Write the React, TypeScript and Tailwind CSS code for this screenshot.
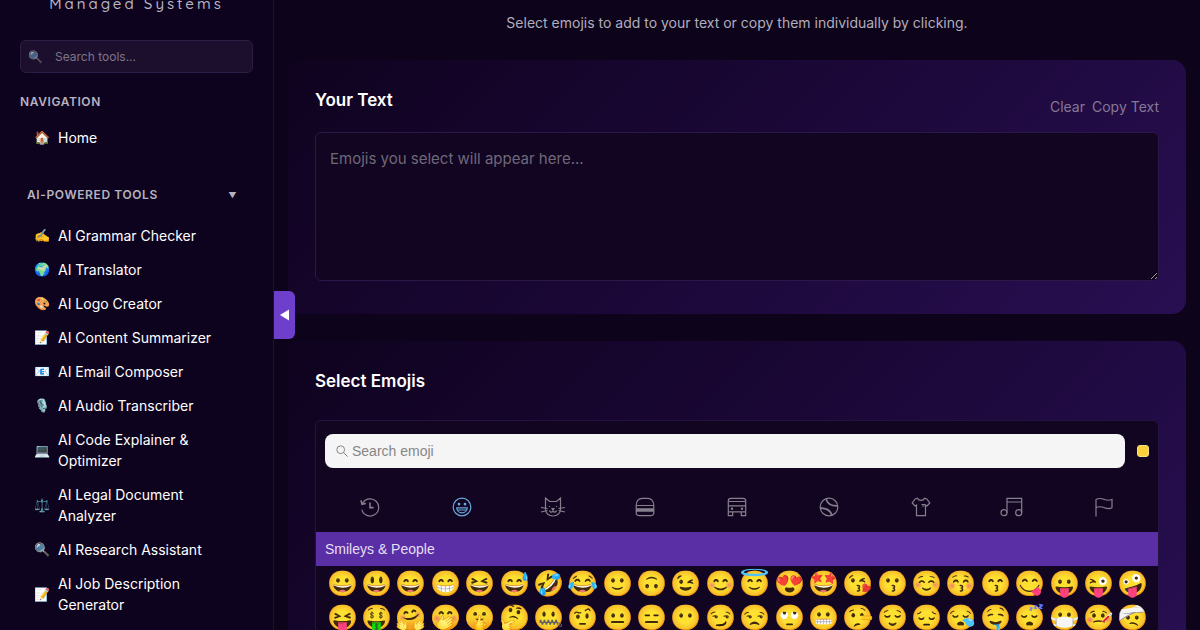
import { useRef, useState } from "react";
import type { ReactNode } from "react";

interface Tool {
  icon: string;
  label: string;
}

const tools: Tool[] = [
  { icon: "✍️", label: "AI Grammar Checker" },
  { icon: "🌍", label: "AI Translator" },
  { icon: "🎨", label: "AI Logo Creator" },
  { icon: "📝", label: "AI Content Summarizer" },
  { icon: "📧", label: "AI Email Composer" },
  { icon: "🎙️", label: "AI Audio Transcriber" },
  { icon: "💻", label: "AI Code Explainer & Optimizer" },
  { icon: "⚖️", label: "AI Legal Document Analyzer" },
  { icon: "🔍", label: "AI Research Assistant" },
  { icon: "📝", label: "AI Job Description Generator" },
];

const smileys = [
  "😀", "😃", "😄", "😁", "😆", "😅", "🤣", "😂", "🙂", "🙃", "😉", "😊",
  "😇", "😍", "🤩", "😘", "😗", "☺️", "😚", "😙", "😋", "😛", "😜", "🤪",
  "😝", "🤑", "🤗", "🤭", "🤫", "🤔", "🤐", "🤨", "😐", "😑", "😶", "😏",
  "😒", "🙄", "😬", "🤥", "😌", "😔", "😪", "🤤", "😴", "😷", "🤒", "🤕",
];

const categories: { name: string; art: ReactNode }[] = [
  {
    name: "Recently Used",
    art: (
      <>
        <path d="M2.6 6.2A8.6 8.6 0 1 1 1.8 12.6" />
        <path d="M1 3.4l1 3.8 3.8-.8M10 5.6v5h3.6" strokeWidth="1.6" />
      </>
    ),
  },
  {
    name: "Smileys & People",
    art: (
      <>
        <circle cx="10" cy="10" r="8.8" />
        <path d="M4.8 10.8h10.4c0 3-2.3 5-5.2 5s-5.2-2-5.2-5zM5.6 13h8.8" />
        <circle cx="7" cy="7.2" r=".8" fill="currentColor" />
        <circle cx="13" cy="7.2" r=".8" fill="currentColor" />
      </>
    ),
  },
  {
    name: "Animals & Nature",
    art: (
      <>
        <path d="M2.5 12V1l4 3.5h7l4-3.5v11c0 4-3 7-7.5 7s-7.5-3-7.5-7z" />
        <path d="M-2 10.5l6.500 1M-2 15l6.500-1.500M22 10.500l-6.500 1M22 15l-6.500-1.500" />
        <path d="M9 11.500h2l-1 1.500zM6.500 13.500c.5 2 3 2 3.500.5.5 1.500 3 1.500 3.500-.5M6.500 9v1M13.500 9v1" />
      </>
    ),
  },
  {
    name: "Food & Drink",
    art: (
      <path d="M1.200 8.500C1.200 4 4 1.300 7 1.300h6c3 0 5.800 2.700 5.800 7.200zM1.200 8.500v7M18.800 8.500v7M1.200 11.800h17.600M1.200 13h17.600M1.200 14.200h17.600v1.300a3.200 3.200 0 0 1-3.200 3.200H4.400a3.200 3.200 0 0 1-3.200-3.200v-1.300" />
    ),
  },
  {
    name: "Travel & Places",
    art: (
      <>
        <path d="M1.300 14.800V4c0-1.800 1-2.700 2.700-2.700h12c1.700 0 2.700.9 2.700 2.700v10.800zM1.300 8.800h17.400M2 4.500h16M1.300 14.800v3.900h4.400v-3.900M14.300 14.800v3.900h4.400v-3.900" />
        <circle cx="5" cy="11.800" r=".6" />
        <circle cx="15" cy="11.800" r=".6" />
      </>
    ),
  },
  {
    name: "Activities",
    art: (
      <>
        <circle cx="10" cy="10" r="8.800" />
        <path
          d="M7 1.900c1.500 4.500 5.800 7.200 11.600 7M1.400 11.100c5.800-.2 10 2.600 11.500 7.200"
          strokeWidth="1.700"
        />
      </>
    ),
  },
  {
    name: "Objects",
    art: (
      <path d="M6.500 1.300c1 2.800 6 2.800 7 0l2.300.7 3 4-2.800 3-1.500-1v10.700h-9V8L4 9 1.200 6l3-4zM10.500 7.500h4M11 9h2.500" />
    ),
  },
  {
    name: "Symbols",
    art: (
      <>
        <path d="M5 15.700V1.300h14.700v14.400M5 5h14.700" />
        <circle cx="2" cy="15.700" r="3" />
        <circle cx="16.700" cy="15.700" r="3" />
      </>
    ),
  },
  {
    name: "Flags",
    art: (
      <path d="M2 19.500V2.500c3-1.800 6-1 8.500 0s5 1 7.500 0v8.200c-2.500 1.300-5 1-7.500 0S5 9.300 2 10.500" />
    ),
  },
];

function ToolLink({ icon, label }: Tool) {
  return (
    <a
      href="#"
      className="flex items-center gap-2 rounded-md py-1.5 pr-8 pl-3.5 text-[14px] leading-[21px] text-white hover:bg-white/5"
    >
      <span className="w-4 shrink-0 text-center text-[13px]">{icon}</span>
      <span>{label}</span>
    </a>
  );
}

function Sidebar() {
  const [open, setOpen] = useState(true);

  return (
    <aside className="relative w-[274px] shrink-0 border-r border-[#1f1136] bg-[#0e031e]">
      <div className="h-full overflow-hidden px-5">
        <div className="-mt-2 text-center font-[Quicksand,Lato,sans-serif] text-[15px] leading-6 font-medium tracking-[3px] text-[#b9b4c2]">
          Managed Systems
        </div>

        <div className="mt-6 flex h-[33px] items-center gap-3 rounded-md border border-[#2d1d45] bg-[#1c0f2e] px-[7px]">
          <span className="text-xs opacity-70">🔍</span>
          <input
            type="text"
            aria-label="Search tools"
            placeholder="Search tools..."
            className="w-full min-w-0 bg-transparent text-xs text-white placeholder-[#7c7586] outline-none"
          />
        </div>

        <h3 className="mt-5 text-xs leading-[18px] font-semibold tracking-wider text-[#b7b2bf]">
          NAVIGATION
        </h3>
        <nav className="mt-2.5">
          <ToolLink icon="🏠" label="Home" />
        </nav>

        <button
          onClick={() => setOpen(!open)}
          className="mt-[31px] flex w-full items-center justify-between px-[7px] pr-4 text-xs leading-5 font-semibold tracking-wider text-[#b7b2bf]"
        >
          AI-POWERED TOOLS
          <span className="text-[8px]">▼</span>
        </button>
        {open && (
          <nav className="mt-3.5 space-y-px">
            {tools.map((tool) => (
              <ToolLink key={tool.label} {...tool} />
            ))}
          </nav>
        )}
      </div>

      {/* Collapse handle */}
      <button
        aria-label="Collapse sidebar"
        className="absolute top-1/2 left-[274px] z-10 flex h-12 w-[21px] -translate-y-1/2 items-center justify-center rounded-r-md bg-[#6d3fcb] text-white"
      >
        <svg viewBox="0 0 10 12" className="h-3 w-2.5" fill="currentColor">
          <path d="M0 6L9 .5v11z" />
        </svg>
      </button>
    </aside>
  );
}

function Card({ children }: { children: ReactNode }) {
  return (
    <section className="rounded-[14px] bg-linear-135 from-[#0f031f] to-[#280f52] px-[27px] py-7">
      {children}
    </section>
  );
}

function EmojiPicker({ onPick }: { onPick: (emoji: string) => void }) {
  const [active, setActive] = useState("Smileys & People");

  return (
    <div className="rounded-t-md border border-[#25133f] bg-[#120522] font-['Liberation_Sans',sans-serif]">
      <div className="flex items-center pt-[13px] pr-2 pl-[9px]">
        <div className="flex h-[34px] flex-1 items-center gap-1 rounded-lg bg-[#f5f5f5] px-[11px]">
          <svg
            viewBox="0 0 12 12"
            className="size-3 shrink-0 text-[#868686]"
            fill="none"
            stroke="currentColor"
          >
            <circle cx="4.7" cy="4.7" r="3.9" />
            <path d="M7.6 7.6l4 4" />
          </svg>
          <input
            type="text"
            aria-label="Search emoji"
            placeholder="Search emoji"
            className="w-full bg-transparent text-sm text-gray-800 placeholder-[#868686] outline-none"
          />
        </div>
        <button
          aria-label="Skin tone"
          className="mr-px ml-3 size-3 rounded-[3px] border border-[#f7e08a] bg-[#f9cf3a]"
        />
      </div>

      <div className="flex h-16 items-center px-2 pt-[13px]">
        {categories.map((c) => (
          <button
            key={c.name}
            aria-label={c.name}
            onClick={() => setActive(c.name)}
            className={`flex flex-1 justify-center ${
              c.name === active ? "text-[#6aa9dd]" : "text-[#85808c]"
            }`}
          >
            <svg
              viewBox="0 0 20 20"
              className="size-5 overflow-visible"
              fill="none"
              stroke="currentColor"
              strokeWidth="1.2"
            >
              {c.art}
            </svg>
          </button>
        ))}
      </div>

      <h3 className="bg-[#5a2fa6] px-[9px] text-sm leading-[34px] text-[#e6dff2]">
        Smileys & People
      </h3>
      <div className="grid grid-cols-[repeat(24,minmax(0,1fr))] pr-2 pl-[9px]">
        {smileys.map((emoji) => (
          <button
            key={emoji}
            onClick={() => onPick(emoji)}
            className="flex h-[34px] items-center justify-center text-[25px] leading-none"
          >
            {emoji}
          </button>
        ))}
      </div>
    </div>
  );
}

export default function App() {
  const [text, setText] = useState("");
  const areaRef = useRef<HTMLTextAreaElement>(null);

  function clear() {
    setText("");
    areaRef.current?.focus();
  }

  return (
    <div className="flex h-screen overflow-hidden bg-[#0d031b] font-[Inter,sans-serif]">
      <Sidebar />

      <main className="min-w-0 flex-1 overflow-hidden px-3.5 pt-3">
        <p className="text-center text-[14px] leading-[22px] text-[#b3aebb]">
          Select emojis to add to your text or copy them individually by
          clicking.
        </p>

        <div className="mt-[26px] space-y-[27px]">
          <Card>
            <div className="mb-3.5 flex items-end justify-between">
              <h2 className="mb-1.5 text-[17px] leading-6 font-semibold text-white">
                <label htmlFor="emoji-text">Your Text</label>
              </h2>
              <div className="flex gap-[7px] text-[14px] leading-[22px] text-[#857896]">
                <button onClick={clear}>Clear</button>
                <button onClick={() => navigator.clipboard.writeText(text)}>
                  Copy Text
                </button>
              </div>
            </div>
            <textarea
              id="emoji-text"
              ref={areaRef}
              value={text}
              onChange={(e) => setText(e.target.value)}
              placeholder="Emojis you select will appear here..."
              className="mb-[5px] block h-[149px] w-full resize-y rounded-md border border-[#2c1748] bg-[#120522] px-3.5 py-3 text-[15px] leading-7 text-white placeholder-[#6f6878] outline-none"
            />
          </Card>

          <Card>
            <h2 className="mb-[27px] text-[17px] leading-6 font-semibold text-white">
              Select Emojis
            </h2>
            <EmojiPicker onPick={(emoji) => setText(text + emoji)} />
          </Card>
        </div>
      </main>
    </div>
  );
}
